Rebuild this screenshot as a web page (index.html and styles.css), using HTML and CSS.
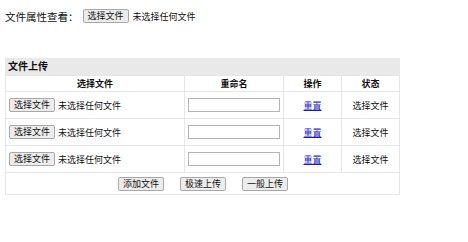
FILE: index.html
```html
<!DOCTYPE html>
<html lang="zh-CN">
<head>
    <meta charset="UTF-8">
    <title>文件上传</title>

    <link rel="stylesheet" href="styles.css">

</head>
<body>

<div class="attr_row">
    <span class="attr_label">文件属性查看：</span>
    <button class="file_btn" type="button">选择文件</button>
    <span class="file_name">未选择任何文件</span>
</div>

<div class="up_box">
    <div class="up_title">文件上传</div>
    <table class="up_table">
        <tr class="head_row">
            <th class="col_file">选择文件</th>
            <th class="col_name">重命名</th>
            <th class="col_op">操作</th>
            <th class="col_state">状态</th>
        </tr>

        <tr>
            <td class="td_file">
                <div class="file_pick">
                    <button class="file_btn" type="button">选择文件</button>
                    <span class="file_name">未选择任何文件</span>
                </div>
            </td>
            <td class="td_name"><input class="name_input" type="text"></td>
            <td class="td_op"><a href="#">重置</a></td>
            <td class="td_state">选择文件</td>
        </tr>

        <tr>
            <td class="td_file">
                <div class="file_pick">
                    <button class="file_btn" type="button">选择文件</button>
                    <span class="file_name">未选择任何文件</span>
                </div>
            </td>
            <td class="td_name"><input class="name_input" type="text"></td>
            <td class="td_op"><a href="#">重置</a></td>
            <td class="td_state">选择文件</td>
        </tr>

        <tr>
            <td class="td_file">
                <div class="file_pick">
                    <button class="file_btn" type="button">选择文件</button>
                    <span class="file_name">未选择任何文件</span>
                </div>
            </td>
            <td class="td_name"><input class="name_input" type="text"></td>
            <td class="td_op"><a href="#">重置</a></td>
            <td class="td_state">选择文件</td>
        </tr>

        <tr class="foot_row">
            <td colspan="4">
                <div class="foot_btns">
                    <button class="act_btn" type="button">添加文件</button>
                    <button class="act_btn" type="button">极速上传</button>
                    <button class="act_btn" type="button">一般上传</button>
                </div>
            </td>
        </tr>
    </table>
</div>

</body>
</html>
```

FILE: styles.css
```css
*{
    margin: 0px;
    padding: 0px;
    box-sizing: border-box;
}
body{
    background-color: white;
    color: #111;
    font-family: "Liberation Sans", "Noto Sans CJK SC", sans-serif;
    font-size: 9px;
}

.attr_row{
    display: flex;
    align-items: center;
    height: 14px;
    margin: 9px 0px 0px 5px;
}

.attr_label{
    font-size: 10.5px;
    margin-right: 4px;
}

.file_btn,.act_btn{
    height: 14px;
    padding: 0px 4px;
    font-family: "Liberation Sans", "Noto Sans CJK SC", sans-serif;
    font-size: 9px;
    line-height: 12px;
    color: #111;
    background-color: #ececec;
    border: 1px solid #a8a8a8;
    border-radius: 2px;
}

.file_name{
    margin-left: 4px;
}

.file_pick{
    display: flex;
    align-items: center;
}

.up_box{
    width: 395px;
    margin: 35px 0px 0px 5px;
}

.up_title{
    height: 17px;
    line-height: 17px;
    padding-left: 3px;
    background-color: #e9e9e9;
    font-size: 10px;
    font-weight: bold;
}

.up_table{
    width: 100%;
    border-collapse: collapse;
}

.up_table th,.up_table td{
    border: 1px solid #e6e6e6;
}

.head_row th{
    height: 16px;
    font-size: 9px;
    font-weight: bold;
    text-align: center;
}

.col_file{
    width: 179px;
}

.col_name{
    width: 99px;
}

.col_op{
    width: 58px;
}

.td_file{
    height: 27px;
    padding-left: 3px;
}

.td_file .file_name{
    margin-left: 3px;
}

.td_name{
    padding-left: 3px;
}

.name_input{
    display: block;
    width: 92px;
    height: 14px;
    border: 1px solid #b4b4b4;
    background-color: white;
}

.td_op,.td_state{
    text-align: center;
}

.td_op a{
    color: #1a1acc;
    text-decoration: underline;
}

.foot_row td{
    height: 22px;
}

.foot_btns{
    display: flex;
    justify-content: center;
    gap: 16px;
    margin-left: 1px;
}

.act_btn{
    width: 46px;
    padding: 0px;
}
```
